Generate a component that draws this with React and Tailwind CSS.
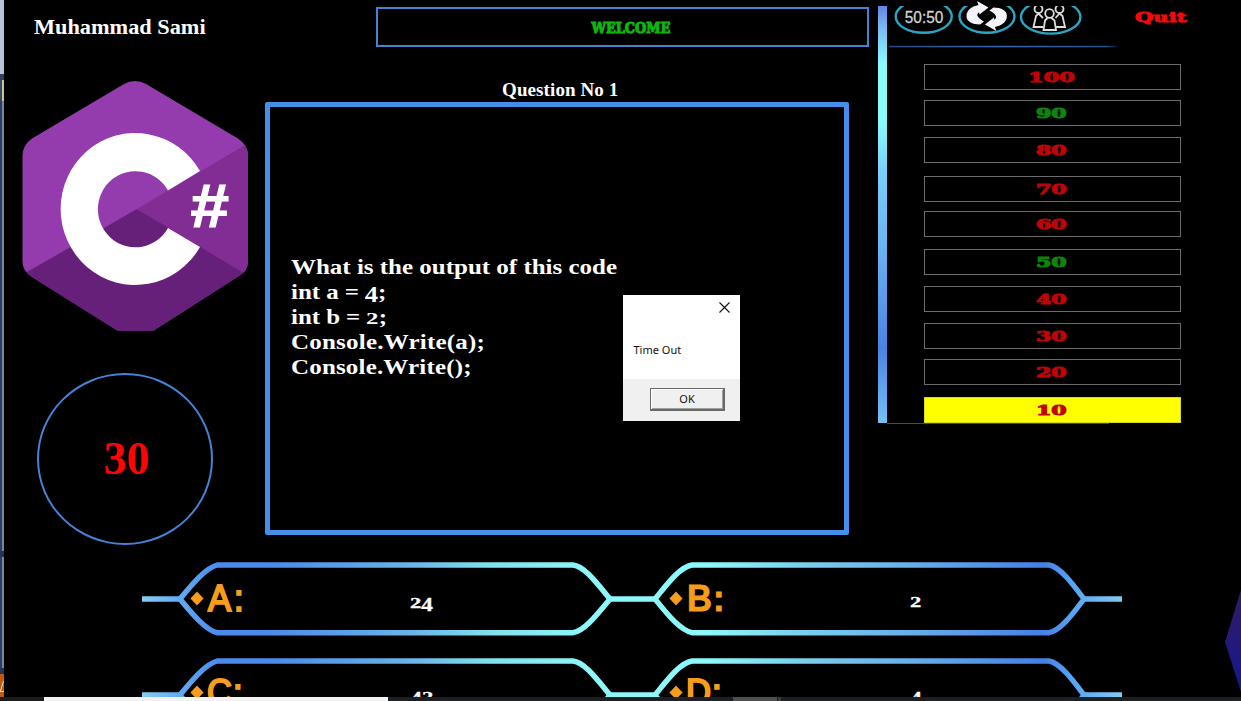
import React from "react";

const LADDER = [
  { value: "100", row: "mt-[17px]", tone: "text-[#c00404]" },
  { value: "90", row: "mt-[10px]", tone: "text-[#0b860b]" },
  { value: "80", row: "mt-[11px]", tone: "text-[#c00404]" },
  { value: "70", row: "mt-[13px]", tone: "text-[#c00404]" },
  { value: "60", row: "mt-[9px]", tone: "text-[#c00404]" },
  { value: "50", row: "mt-[12px]", tone: "text-[#0b860b]" },
  { value: "40", row: "mt-[11px]", tone: "text-[#c00404]" },
  { value: "30", row: "mt-[11px]", tone: "text-[#c00404]" },
  { value: "20", row: "mt-[10px]", tone: "text-[#c00404]" },
  { value: "10", row: "mt-[12px]", tone: "text-[#c00404]", active: true },
];

function CSharpLogo() {
  return (
    <svg className="block h-[252px] w-[228px]" viewBox="21 80 228 252">
      <defs>
        <clipPath id="hex">
          <path d="M124 84 Q135 78 146 84 L238 138.500 Q248 145 248 156 L248 261 Q248 271 239 276 L153 331 L118 331 L32 277 Q22.500 271 22.500 262 L22.500 156 Q22.500 145 32 138.500 Z" />
        </clipPath>
      </defs>
      <g clipPath="url(#hex)">
        <rect x="20" y="78" width="230" height="256" fill="#943cad" />
        <path d="M20 276 L137 209 L252 276 V340 H20 Z" fill="#672079" />
        <path d="M137 209 L252 141 V278 Z" fill="#822d94" />
      </g>
      <path d="M200 171 A74.700 76 0 1 0 200 247 L168 228 A37.500 38 0 1 1 168 190.500 Z" fill="#fff" />
      <text x="190.500" y="226.500" fill="#fff" stroke="#fff" strokeWidth="1.2" fontFamily="Liberation Sans" fontWeight="bold" fontSize="61" textLength="38.500" lengthAdjust="spacingAndGlyphs">#</text>
    </svg>
  );
}

function Lifelines() {
  return (
    <svg className="block h-[42px] w-[238px]" viewBox="887 6 238 42">
      <defs>
        <linearGradient id="rule" x1="0" x2="1">
          <stop offset="0" stopColor="#2a4a86" />
          <stop offset="0.5" stopColor="#3568b4" />
          <stop offset="0.95" stopColor="#2a4f90" />
          <stop offset="1" stopColor="#0a1830" />
        </linearGradient>
      </defs>
      <g fill="none" stroke="#2ba5c2" strokeWidth="2.4">
        <ellipse cx="923.700" cy="16.500" rx="28" ry="16.300" />
        <ellipse cx="987" cy="16.500" rx="27.500" ry="16.300" />
        <ellipse cx="1050.700" cy="17" rx="29.700" ry="16.600" />
      </g>
      <text x="904.800" y="22.800" fill="#d4d4d4" stroke="#d4d4d4" strokeWidth="0.3" fontFamily="Liberation Sans" fontSize="17" textLength="38.500" lengthAdjust="spacingAndGlyphs">50:50</text>
      <g fill="none" stroke="#dedede" strokeWidth="1.800">
        <circle cx="1038.500" cy="9" r="4" />
        <circle cx="1059.500" cy="9" r="4" />
        <path d="M1043 27 H1033.500 L1036 16 L1038.500 13.500 L1043 18" />
        <path d="M1056 27 H1065 L1062.500 16 L1059.500 13.500 L1055.500 18" />
        <circle cx="1049.500" cy="13.500" r="4.300" />
        <path d="M1047.500 18 L1045 20.500 L1043.500 30 H1056 L1054.500 20.500 L1051.500 18" />
      </g>
      <rect x="889" y="45.800" width="228" height="1.500" fill="url(#rule)" />
    </svg>
  );
}

function SwapIcon() {
  return (
    <svg className="absolute left-[962px] top-0 h-[33px] w-[50px]" viewBox="962 0 50 33">
      <g fill="#f4f2fa">
        <path id="swap" d="M977 1 L988.500 7.500 L979.500 14.500 L979 12.300 C975.500 14.500 977.500 18 984 21.500 L980 24.500 C972 24.500 966.500 21.500 966.500 16 C966.500 10.500 971 6.500 978.500 5 Z" />
        <use href="#swap" transform="rotate(180 986.700 16)" />
      </g>
    </svg>
  );
}

function AnswerFrame() {
  return (
    <svg className="absolute left-[137px] top-0 h-[96px] w-[982px]" viewBox="141 549 982 96">
      <defs>
        <linearGradient id="beam" gradientUnits="userSpaceOnUse" x1="142" x2="1122" y1="0" y2="0">
          <stop offset="0" stopColor="#86cdf0" />
          <stop offset="0.04" stopColor="#5faaf4" />
          <stop offset="0.08" stopColor="#4a8aeb" />
          <stop offset="0.13" stopColor="#4a8aea" />
          <stop offset="0.27" stopColor="#68b2e8" />
          <stop offset="0.36" stopColor="#82e2ee" />
          <stop offset="0.46" stopColor="#8cf8fa" />
          <stop offset="0.58" stopColor="#8cf8fa" />
          <stop offset="0.66" stopColor="#7cd4ee" />
          <stop offset="0.78" stopColor="#68b0ea" />
          <stop offset="0.92" stopColor="#4480e6" />
          <stop offset="0.95" stopColor="#58a4f6" />
          <stop offset="1" stopColor="#80ccf0" />
        </linearGradient>
      </defs>
      <g fill="none" stroke="url(#beam)" strokeWidth="5.4" strokeLinejoin="round">
        <path d="M142 599.010 L180 598.990" />
        <path d="M180 599 C193 583 206 568 217 565 H573 C584 566 596 582 610 599 C596 616 584 631 573 632.700 H217 C206 630 193 615 180 599 Z" />
        <path d="M610 599.010 L655 598.990" />
        <path d="M655 599 C668 583 680 567 692 565 H1049 C1060 567 1072 583 1084 599 C1072 615 1060 631 1049 632.700 H692 C680 630 668 615 655 599 Z" />
        <path d="M1084 599.010 L1122 598.990" />
      </g>
    </svg>
  );
}

function Label({ letter, className }) {
  return (
    <div className="flex h-[40px] items-center text-[#f79d1b]">
      <svg className="mb-[1px] h-[15px] w-[14px] shrink-0" viewBox="0 0 14 15">
        <path d="M7 0.500 L13.500 7.500 L7 14.500 L0.500 7.500 Z" fill="#f79d1b" />
      </svg>
      <span className={"flex origin-left whitespace-nowrap font-['Liberation_Sans',sans-serif] text-[36px] leading-[40px] " + className}>{letter}</span>
    </div>
  );
}

/* Text figures: 2 sits at x-height, 4 hangs below the baseline. */
function Figure({ n, small }) {
  if (n === "2")
    return (
      <span className={small ? "inline-block w-[11px] origin-left scale-x-[1.5] text-[15px]" : "inline-block w-[11px] origin-left scale-x-[1.25] text-[17.500px]"}>2</span>
    );
  return (
    <span className={small ? "relative top-[3px] inline-block w-[12px] origin-left scale-x-[1.25] text-[19px]" : "relative top-[3px] inline-block w-[11.500px] origin-left scale-x-[1.02] text-[23px]"}>{n}</span>
  );
}

function AnswerText({ digits }) {
  return (
    <div className="flex h-[40px] items-baseline pt-[3px] font-['Liberation_Serif',serif] text-[19px] font-bold leading-[40px] text-white [-webkit-text-stroke:0.300px_#fff]">
      {digits.map((n, i) => <Figure key={i} n={n} small />)}
    </div>
  );
}

function AnswerRow({ left, right, leftClass, rightClass, a, b, offset }) {
  return (
    <div className="relative h-[96px] w-[1237px] shrink-0">
      <AnswerFrame />
      <div className={"relative flex h-full pl-[186px] " + offset}>
        <div className="flex w-[479px]">
          <div className="w-[220px]">
            <Label letter={left} className={leftClass} />
          </div>
          <AnswerText digits={a} />
        </div>
        <div className="flex">
          <div className="w-[241px]">
            <Label letter={right} className={rightClass} />
          </div>
          <AnswerText digits={b} />
        </div>
      </div>
    </div>
  );
}

function Dialog() {
  return (
    <div className="absolute left-[623px] top-[295px] flex h-[126px] w-[117px] flex-col bg-white font-['Noto_Sans',sans-serif] text-[11px] text-[#111]">
      <div className="flex h-[24px] items-center justify-end pr-[10px]">
        <svg className="h-[11px] w-[11px]" viewBox="0 0 11 11">
          <path d="M0.500 0.500 L10.500 10.500 M10.500 0.500 L0.500 10.500" stroke="#111" strokeWidth="1.100" />
        </svg>
      </div>
      <div className="flex flex-1 items-center pb-[2px] pl-[10.500px] pt-[4px]">
        <span>Time Out</span>
      </div>
      <div className="flex h-[42px] items-start justify-end bg-[#f0f0f0] pr-[15px] pt-[9px]">
        <div className="flex h-[23px] w-[75px] items-center justify-center border border-b-2 border-r-2 border-[#696969] bg-[#f0f0f0] shadow-[inset_1px_1px_0_#fff,inset_-1px_-1px_0_#a0a0a0]">OK</div>
      </div>
    </div>
  );
}

export default function App() {
  return (
    <div className="relative flex h-[701px] w-[1241px] flex-col overflow-hidden bg-black">
      <div className="flex h-[697px] overflow-hidden">
        <div className="flex w-[4px] shrink-0 flex-col">
          <div className="h-[74px] bg-[#b9c4da]" />
          <div className="h-[6px] bg-[#2f3f60]" />
          <div className="h-[21px] border-l-2 border-[#34466a] bg-[#c9c894]" />
          <div className="h-[450px] border-r-2 border-[#76849f] bg-[#2c3d60]" />
          <div className="h-[6px] bg-[#26344f]" />
          <div className="h-[111px] border-r-2 border-[#76849f] bg-[#2c3d60]" />
          <div className="h-[6px] bg-[#26344f]" />
          <div className="flex-1 bg-[#c2590d]">
            <svg className="block h-[23px] w-[4px]" viewBox="0 0 4 23">
              <path d="M0.500 17 L3.500 7 M0 17.500 H4" stroke="#eeddcc" strokeWidth="1" fill="none" />
            </svg>
          </div>
        </div>
        <div className="flex w-[1237px] flex-col">
          <div className="flex h-[549px] shrink-0">
            <div className="w-[874px]">
              <header className="flex h-[73px] pl-[30px] pt-[7px]">
                <div className="w-[342px]">
                  <span className="inline-block origin-left scale-x-[1.115] whitespace-nowrap font-['Liberation_Serif',serif] text-[20px] font-bold leading-[40px] text-white">Muhammad Sami</span>
                </div>
                <div className="flex h-[40px] w-[493px] items-center justify-center border-2 border-[#4583d0] pl-[16px] pt-[2px]">
                  <span className="inline-block scale-x-[.86] whitespace-nowrap font-['DejaVu_Serif',serif] text-[15px] font-bold leading-none text-[#0bb80b] [-webkit-text-stroke:1.100px_#0bb80b]">WELCOME</span>
                </div>
              </header>
              <div className="flex">
                <div className="flex w-[261px] flex-col pl-[17px] pt-[7px]">
                  <CSharpLogo />
                  <div className="ml-[16px] mt-[41px] flex h-[172px] w-[176px] items-center justify-center rounded-[50%] border-2 border-[#4483d6] pb-[1px] pl-[3px] font-['Liberation_Serif',serif] text-[46px] font-bold leading-none text-[#fb0505]">30</div>
                </div>
                <div className="w-[584px]">
                  <h1 className="h-[29px] pl-[237px] pt-[2px] font-['Liberation_Serif',serif] text-[19px] font-bold leading-[29px] tracking-[.1px] text-white">Question No 1</h1>
                  <div className="flex h-[433px] items-start rounded-[2px] border-[5px] border-[#458fea] pl-[21px] pt-[147px]">
                    <div className="origin-left scale-x-[1.135] whitespace-nowrap font-['Liberation_Serif',serif] text-[22px] font-bold leading-[25px] text-white">
                      <p className="h-[25px]">What is the output of this code</p>
                      <p className="h-[25px] [word-spacing:-0.200px]">int a = <Figure n="4" />;</p>
                      <p className="h-[25px] [word-spacing:-0.200px]">int b = <Figure n="2" />;</p>
                      <p className="h-[25px] tracking-[.2px]">Console.Write(a);</p>
                      <p className="h-[25px] tracking-[.16px]">Console.Write();</p>
                    </div>
                  </div>
                </div>
              </div>
            </div>
            <aside className="flex pt-[6px]">
              <div className="h-[417px] w-[9px] bg-[linear-gradient(to_bottom,#6484e4_0%,#78b8f4_5%,#8afcfc_14%,#8afcfc_27%,#78cff8_40%,#68b0f0_60%,#4a82e2_82%,#74c0f8_100%)]" />
              <div className="h-[417px] w-[300px]">
                <div className="flex h-[41px]">
                  <Lifelines />
                  <span className="mt-[3px] inline-block h-[20px] w-[32px] origin-left translate-x-[10px] scale-x-[1.62] font-['DejaVu_Serif',serif] text-[13px] font-bold leading-[18px] text-[#f40808] [-webkit-text-stroke:0.900px_#f40808]">Quit</span>
                </div>
                <div className="flex flex-col pl-[37px]">
                  {LADDER.map((r) => (
                    <div key={r.value} className={"flex h-[26px] w-[257px] items-center justify-center border pt-[2px] " + (r.active ? "border-[#d8d820] bg-[#ffff00] " : "border-[#6c6c6c] ") + r.row}>
                      <span className={"inline-block translate-x-[-1px] scale-x-[1.850] font-['DejaVu_Serif',serif] text-[12px] font-bold leading-none [-webkit-text-stroke:0.900px_currentColor] " + r.tone}>{r.value}</span>
                    </div>
                  ))}
                </div>
                <div className="h-px w-[222px] bg-[#2c4f86]" />
              </div>
            </aside>
          </div>
          <AnswerRow
            left={<><span className="w-[27px]">A</span><span>:</span></>}
            right={<><span className="w-[27px]">B</span><span>:</span></>}
            leftClass="ml-[4px] scale-x-[.96] [-webkit-text-stroke:2px_#f79d1b]"
            rightClass="ml-[4px] font-bold scale-x-[.96] [-webkit-text-stroke:0.800px_#f79d1b]"
            a={["2", "4"]}
            b={["2"]}
            offset="pt-[30px]"
          />
          <AnswerRow
            left={<><span className="w-[27px]">C</span><span>:</span></>}
            right={<><span className="w-[27px]">D</span><span>:</span></>}
            leftClass="ml-[3px] scale-x-[.96] [-webkit-text-stroke:2px_#f79d1b]"
            rightClass="ml-[3px] scale-x-[.96] [-webkit-text-stroke:2.200px_#f79d1b]"
            a={["4", "2"]}
            b={["4"]}
            offset="pt-[28px]"
          />
        </div>
      </div>
      <div className="flex h-[4px] bg-[#1d2023]">
        <div className="w-[44px] bg-[#1c1c1c]" />
        <div className="w-[344px] bg-[#f3f3f3]" />
        <div className="ml-[345px] w-[44px] bg-[#4c4f50]" />
        <div className="ml-px w-[3px] bg-[#3c3e40]" />
      </div>
      <SwapIcon />
      <svg className="absolute left-[1225px] top-[588px] h-[104px] w-[16px]" viewBox="0 0 16 104">
        <defs>
          <linearGradient id="gem" x1="0" y1="0" x2="0" y2="1">
            <stop offset="0" stopColor="#321a68" />
            <stop offset="1" stopColor="#16188c" />
          </linearGradient>
        </defs>
        <path d="M0 54 L16 2 V104 Z" fill="url(#gem)" />
      </svg>
      <Dialog />
    </div>
  );
}
